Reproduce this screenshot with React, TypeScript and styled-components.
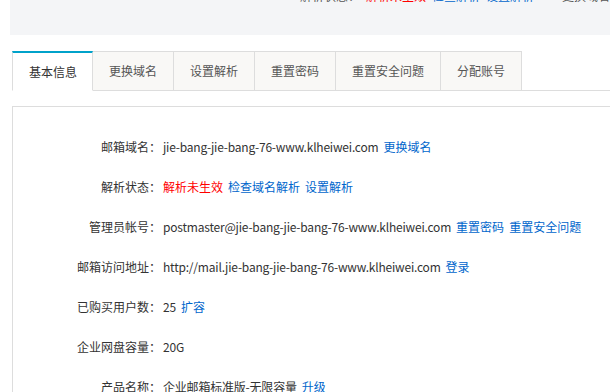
import React from "react";
import styled, { createGlobalStyle } from "styled-components";

const Global = createGlobalStyle`
  html, body { margin: 0; padding: 0; background: #fff; }
  body {
    font-family: "Microsoft YaHei", "Noto Sans CJK SC", "Noto Sans", sans-serif;
    font-size: 12px;
    color: #333;
    overflow: hidden;
  }
`;

const Page = styled.div`
  padding-left: 10px;
  width: 600px;
`;

const TopBar = styled.div`
  height: 35px;
  background: #f4f5f7;
  overflow: hidden;
  width: 620px;
`;

const StatusLine = styled.div`
  display: flex;
  gap: 6px;
  margin-top: -10px;
  padding-left: 290px;
  line-height: 12px;
  font-size: 12px;
  white-space: nowrap;
`;

const Txt = styled.span<{ $tone?: "gray" | "red" | "blue"; $gapLeft?: number }>`
  color: ${(p) => (p.$tone === "red" ? "#f00" : p.$tone === "blue" ? "#06c" : "#555")};
  margin-left: ${(p) => p.$gapLeft ?? 0}px;
`;

const Tabs = styled.div`
  display: flex;
  margin: 16px 0 0 2px;
  width: 620px;
`;

const Tab = styled.div<{ $active?: boolean }>`
  height: ${(p) => (p.$active ? "36px" : "37px")};
  padding: ${(p) => (p.$active ? "0 15px 1px 16px" : "0 16px 1px")};
  display: flex;
  align-items: center;
  justify-content: center;
  font-size: 12px;
  color: ${(p) => (p.$active ? "#333" : "#555")};
  background: ${(p) => (p.$active ? "#fff" : "#f9f8f6")};
  border: 1px solid #ddd;
  border-left: ${(p) => (p.$active ? "1px solid #ddd" : "none")};
  border-top: ${(p) => (p.$active ? "2px solid #00a2ca" : "1px solid #ddd")};
  border-bottom: ${(p) => (p.$active ? "1px solid transparent" : "1px solid #ddd")};
  box-sizing: content-box;
`;

const TabFill = styled.div`
  flex: 1;
  border-bottom: 1px solid #ddd;
`;

const Panel = styled.div`
  margin: 15px 0 0 2px;
  border-top: 1px solid #ddd;
  border-left: 1px solid #ddd;
  padding-top: 19px;
  width: 620px;
`;

const Row = styled.div`
  display: flex;
  align-items: center;
  height: 40px;
  white-space: nowrap;
`;

const Label = styled.div`
  width: 148px;
  text-align: right;
  color: #333;
  flex: none;
`;

const Value = styled.div`
  margin-left: 2px;
  display: flex;
  gap: 5px;
  color: #333;
`;

const Plain = styled.span`
  letter-spacing: -0.2px;
`;

const Link = styled.a<{ $red?: boolean }>`
  color: ${(p) => (p.$red ? "#f00" : "#06c")};
  text-decoration: none;
  cursor: pointer;
`;

const tabs = ["基本信息", "更换域名", "设置解析", "重置密码", "重置安全问题", "分配账号"];

type RowData = { label: string; value?: string; links?: { text: string; red?: boolean }[] };

const rows: RowData[] = [
  { label: "邮箱域名：", value: "jie-bang-jie-bang-76-www.klheiwei.com", links: [{ text: "更换域名" }] },
  { label: "解析状态：", links: [{ text: "解析未生效", red: true }, { text: "检查域名解析" }, { text: "设置解析" }] },
  { label: "管理员帐号：", value: "postmaster@jie-bang-jie-bang-76-www.klheiwei.com", links: [{ text: "重置密码" }, { text: "重置安全问题" }] },
  { label: "邮箱访问地址：", value: "http://mail.jie-bang-jie-bang-76-www.klheiwei.com", links: [{ text: "登录" }] },
  { label: "已购买用户数：", value: "25", links: [{ text: "扩容" }] },
  { label: "企业网盘容量：", value: "20G" },
  { label: "产品名称：", value: "企业邮箱标准版-无限容量", links: [{ text: "升级" }] },
];

export default function App() {
  return (
    <Page>
      <Global />
      <TopBar>
        <StatusLine>
          <Txt>解析状态：</Txt>
          <Txt $tone="red">解析未生效</Txt>
          <Txt $tone="blue">检查解析</Txt>
          <Txt $tone="blue">设置解析</Txt>
          <Txt $gapLeft={22}>更换域名</Txt>
        </StatusLine>
      </TopBar>
      <Tabs>
        {tabs.map((t, i) => (
          <Tab key={t} $active={i === 0}>
            {t}
          </Tab>
        ))}
        <TabFill />
      </Tabs>
      <Panel>
        {rows.map((r) => (
          <Row key={r.label}>
            <Label>{r.label}</Label>
            <Value>
              {r.value && <Plain>{r.value}</Plain>}
              {r.links?.map((l) => (
                <Link key={l.text} $red={l.red}>
                  {l.text}
                </Link>
              ))}
            </Value>
          </Row>
        ))}
      </Panel>
    </Page>
  );
}
